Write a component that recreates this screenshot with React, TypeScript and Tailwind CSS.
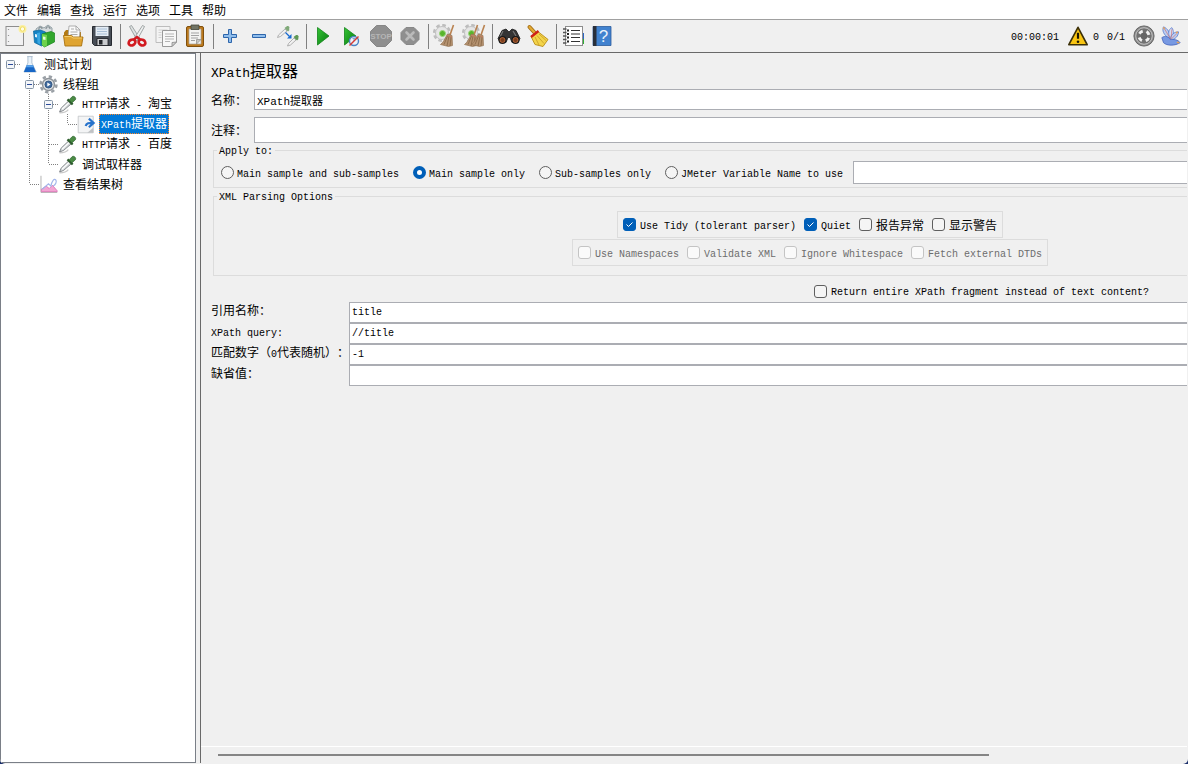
import React, { useState } from "react";
import clsx from "clsx";

const menus = ["文件", "编辑", "查找", "运行", "选项", "工具", "帮助"];

// Latin runs are set in a 10px mono so that two letters fill one Chinese cell.
function Txt({ text, big }: { text: string; big?: boolean }) {
  return (
    <span className="whitespace-pre [text-spacing-trim:space-all]">
      {text.split(/([\x20-\x7e]+)/).map((part, i) =>
        i % 2 === 1 ? (
          <span
            key={i}
            className={clsx(
              "font-['Liberation_Mono',monospace]",
              big ? "text-[13px]" : "text-[10px]"
            )}
          >
            {part}
          </span>
        ) : (
          part
        )
      )}
    </span>
  );
}

function Svg({ size = 24, children }: { size?: number; children: React.ReactNode }) {
  return (
    <svg width={size} height={size} viewBox="0 0 24 24" fill="none" className="shrink-0" aria-hidden="true">
      {children}
    </svg>
  );
}

function Gear() {
  return (
    <>
      <circle cx="9" cy="9" r="7.800" stroke="#bdbdbd" strokeWidth="2.600" strokeDasharray="3.600 2.526" />
      <circle cx="9" cy="9" r="6.500" fill="#e6e6e6" stroke="#c2c2c2" />
      <circle cx="9.500" cy="9.500" r="3" fill="#58b52c" stroke="#9bd47b" />
    </>
  );
}

function Broom({ x = 0 }: { x?: number }) {
  return (
    <g transform={`translate(${x} 0)`}>
      <path d="M20.500 1 17 11" stroke="#b98250" strokeWidth="1.600" />
      <path d="m14.500 10 4.500 1.500.5 10-4 1-8-2C11 18 12 14 14.500 10Z" fill="#b59270" stroke="#947352" strokeWidth=".7" />
      <path d="m14.500 12-3.500 8.500M16 12l-2 10M18 13l-1 9" stroke="#80603f" strokeWidth=".7" />
      <path d="m14 11.500 5 1.700" stroke="#c07a5e" strokeWidth="1" />
    </g>
  );
}

const icons: Record<string, React.ReactNode> = {
  new: (
    <>
      <rect x="3" y="2.500" width="17.500" height="19" fill="#f1f1f2" stroke="#8d8d8d" />
      <path d="M5.500 5v1M5.500 11v1M5.500 17v1" stroke="#999" strokeWidth="1.200" />
      <circle cx="19.500" cy="5" r="4" fill="#fbf0a0" />
      <circle cx="19.500" cy="5" r="2.200" fill="#fffce2" stroke="#f0dc62" />
    </>
  ),
  templates: (
    <>
      <path d="m4 5 4-3 4 2 4-3 4 3v5H4Z" fill="#d5dadd" stroke="#7f8f94" strokeWidth=".8" />
      <path d="M7 6c-1-3 3-4 3-1M14 5c0-3 4-3 4 0" stroke="#889297" strokeWidth="1.200" />
      <path d="m1.500 7 7-1 5 2v12l-4 2-7-3.500Z" fill="#1583c4" stroke="#0b669b" strokeWidth=".7" />
      <path d="m5 9 3-.5v12L5.500 19Z" fill="#39a8e3" />
      <path d="m3 10 2 .5v3L3 13Z" fill="#dff2ff" />
      <path d="m10 10 9-2.500 3.500 1.500v9l-10 5-2.500-2Z" fill="#32a72d" stroke="#17831a" strokeWidth=".7" />
      <path d="m10 10 5 1v10.500L12.500 23 10 21Z" fill="#6ed24b" />
      <path d="m11 12.500 2.500.5v3l-2.500-.5Z" fill="#e4fbd9" />
    </>
  ),
  open: (
    <>
      <path d="M3 8.500 5 6h4l1 2h10v6H3Z" fill="#b27912" />
      <path d="m7 13 1-11h7l4 4-.5 8Z" fill="#fafafa" stroke="#9c9c9c" strokeWidth=".8" />
      <path d="M15 2v4h4M10 5h3M9.500 8h7M9.500 10.500h7" stroke="#a4a4a4" strokeWidth=".9" />
      <path d="M2.500 11.500h8l2 1.500H22L20.500 22H4Z" fill="#dfa431" stroke="#a97311" strokeWidth=".9" />
      <path d="M3.500 12.500H10l2 1.500h9" stroke="#f6cd6c" />
    </>
  ),
  save: (
    <>
      <path d="M2.500 2.500h19v19h-17l-2-2Z" fill="#474d56" stroke="#262a30" />
      <path d="M5.500 2.500h13v9.500h-13Z" fill="#e5edf5" />
      <path d="M7 5h10M7 7.500h10M7 10h10" stroke="#a9bfd6" />
      <path d="M7 14.500h11v7H7Z" fill="#c9cbce" stroke="#191b1f" strokeWidth=".8" />
      <path d="M9 16h3.500v4.500H9Z" fill="#23262b" />
    </>
  ),
  cut: (
    <>
      <path d="M4.500 2.500 6.500 1.500l9 14-3 1.500Z" fill="#dfe3e3" stroke="#8a9090" strokeWidth=".8" />
      <path d="M19.500 2.500 17.500 1.500l-9 14 3 1.500Z" fill="#eff1f1" stroke="#8a9090" strokeWidth=".8" />
      <path d="m9 15.500 3-2.500 3 2.500" stroke="#d21a20" strokeWidth="2.400" />
      <ellipse cx="7" cy="18.500" rx="3.500" ry="2.800" transform="rotate(-28 7 18.500)" stroke="#d21a20" strokeWidth="2.700" />
      <ellipse cx="17" cy="18.500" rx="3.500" ry="2.800" transform="rotate(28 17 18.500)" stroke="#d21a20" strokeWidth="2.700" />
    </>
  ),
  copy: (
    <>
      <path d="M2 2.500h14v16H2Z" fill="#f3f3f3" stroke="#bdbdbd" />
      <path d="M4.500 6h9M4.500 8.500h3M4.500 11h3M4.500 13.500h3" stroke="#d0d0d0" />
      <path d="M8.500 6.500h14V18L18 22.500H8.500Z" fill="#f8f8f8" stroke="#999" />
      <path d="M11 10h9M11 12.500h9M11 15h9M11 17.500h5" stroke="#b5b5b5" />
      <path d="m22.500 18-4.500.5v4Z" fill="#d0d0d0" stroke="#888" strokeWidth=".8" />
    </>
  ),
  paste: (
    <>
      <rect x="3.500" y="2.500" width="17" height="20" rx="1.500" fill="#bd7a1d" stroke="#80500e" />
      <path d="M6 5h12v15H6Z" fill="#f4f4f2" stroke="#a7a59d" strokeWidth=".7" />
      <path d="M8 1h8v4.500H8Z" fill="#707465" stroke="#44473b" strokeWidth=".8" />
      <path d="M8 9h8M8 11.500h8M8 14h7M8 16.500h4" stroke="#a3a3a3" />
      <path d="M18 15.500 13.500 20v-4.500Z" fill="#c6c6c4" stroke="#8c8c8a" strokeWidth=".7" />
    </>
  ),
  expand: (
    <path d="M10.500 5.500h3v5h5v3h-5v5h-3v-5h-5v-3h5Z" fill="#8fbdec" stroke="#2d65ab" />
  ),
  collapse: <path d="M5.500 10.500h13v3h-13Z" fill="#8fbdec" stroke="#2d65ab" />,
  toggle: (
    <>
      <path d="m1.500 13.500 1-2.500L9 5l2 2-6.500 5.500Z" fill="#f1f1f1" stroke="#a9a9a9" strokeWidth=".9" />
      <path d="m8.500 4 3.500 3.500L13.500 6 13 5c1.500-1.500-.5-4-2.500-2.500Z" fill="#7fa978" />
      <path d="m11.500 22 1-2.500L18 14l2 2-5.500 5Z" fill="#f1f1f1" stroke="#a9a9a9" strokeWidth=".9" />
      <path d="m17.500 13 3.500 3.500 1.500-1.500-.3-1c1.500-1.500-.7-4-2.700-2.500Z" fill="#5f9856" />
      <path d="m9.500 8.500 4 4" stroke="#1769d0" strokeWidth="1.300" />
      <path d="M15.500 14.500H11l4.500-4.500Z" fill="#1769d0" />
    </>
  ),
  start: <path d="M6.500 3.500 18 12 6.500 21Z" fill="url(#go)" stroke="#118419" strokeWidth=".8" />,
  startNoPause: (
    <>
      <path d="M4.500 3.500 16 12 4.500 21Z" fill="url(#go)" stroke="#118419" strokeWidth=".8" />
      <circle cx="14" cy="17" r="4.500" fill="#eef2f8" stroke="#4b83c4" strokeWidth="1.400" />
      <path d="M12.500 14.500h3M14 17v-2.500" stroke="#7fa6cf" />
      <path d="m9.500 21.500 9-9" stroke="#d83a34" strokeWidth="1.500" />
    </>
  ),
  stop: (
    <>
      <path d="M7.500 1.500h9l6 6v9l-6 6h-9l-6-6v-9Z" fill="#8f8f8f" stroke="#868686" />
      <text x="12" y="15" textAnchor="middle" fontSize="8" fontWeight="700" fontFamily="Liberation Sans, sans-serif" fill="#b6b6b6">
        STOP
      </text>
    </>
  ),
  shutdown: (
    <>
      <path d="M8 3.500h8l5 5v7l-5 5H8l-5-5v-7Z" fill="#8f8f8f" stroke="#888" />
      <path d="m8.500 8.500 7 7m0-7-7 7" stroke="#bababa" strokeWidth="2.600" strokeLinecap="round" />
    </>
  ),
  clear: (
    <>
      <Gear />
      <Broom />
    </>
  ),
  clearAll: (
    <>
      <Gear />
      <Broom x={-5} />
      <Broom x={2} />
    </>
  ),
  search: (
    <>
      <path d="M5 6.500 9 5l3 3 3-3 4 1.500 4 8-2 4h-6l-2-5h-2l-2 5H3l-2-4Z" fill="#343434" stroke="#1b1b1b" strokeWidth=".8" />
      <path d="m6 7-3 6M16 7l3 5" stroke="#777" strokeWidth="1.200" />
      <circle cx="5.500" cy="16" r="4" fill="#191919" />
      <circle cx="18.500" cy="16" r="4" fill="#191919" />
      <circle cx="5.500" cy="16" r="2.500" fill="#7b3e1e" stroke="#c46f3b" strokeWidth=".8" />
      <circle cx="18.500" cy="16" r="2.500" fill="#7b3e1e" stroke="#c46f3b" strokeWidth=".8" />
    </>
  ),
  searchReset: (
    <>
      <path d="m3.500 3 5 5.500" stroke="#a36c12" strokeWidth="4" strokeLinecap="round" />
      <path d="m3.500 3 5 5.500" stroke="#e3ab35" strokeWidth="2.200" strokeLinecap="round" />
      <path d="M12.500 8 22 15.500 17 22.500l-8-2L5 12.500Z" fill="#f3d44a" stroke="#b98c15" strokeWidth=".9" />
      <path d="m9 13 4 8M11 11.500l7 8M13 10l7 6.500" stroke="#cda328" strokeWidth=".9" />
      <path d="m5 13 7.500-6" stroke="#cf2118" strokeWidth="2.400" />
    </>
  ),
  functions: (
    <>
      <path d="M21 9h2v6h-2Z" fill="#2b67c7" />
      <path d="M21 15h2v5h-2Z" fill="#2fae32" />
      <rect x="4.500" y="2.500" width="17" height="19" fill="#fff" stroke="#8d8d8d" />
      <path d="M10 6.500h9M10 10h9M10 13.500h9M10 17.500h9" stroke="#333" strokeWidth="1.200" />
      <path d="M6 6.500h2M6 10h2M6 13.500h2M6 17.500h2" stroke="#222" strokeWidth="2" />
      <path d="M2 5h3.500M2 8.500h3.500M2 12h3.500M2 15.500h3.500M2 19h3.500" stroke="#555" strokeWidth="1.500" />
    </>
  ),
  help: (
    <>
      <path d="M3 2.500h18v19H3Z" fill="#4182cf" stroke="#2b5c9c" strokeWidth=".8" />
      <path d="M3 2h3.500v20H3Z" fill="#292f39" />
      <text x="13.500" y="18" textAnchor="middle" fontSize="17" fontFamily="Liberation Sans, sans-serif" fill="#e8f1fb">
        ?
      </text>
    </>
  ),
};

const toolGroups = [
  ["new", "templates", "open", "save"],
  ["cut", "copy", "paste"],
  ["expand", "collapse", "toggle"],
  ["start", "startNoPause", "stop", "shutdown"],
  ["clear", "clearAll"],
  ["search", "searchReset"],
  ["functions", "help"],
];

function Toolbar() {
  return (
    <div className="flex h-[34px] shrink-0 items-center border-y border-t-[#a0a0a0] border-b-[#696969]">
      <svg width="0" height="0" className="absolute" aria-hidden="true">
        <linearGradient id="go" x1="0" y1="0" x2="1" y2="1">
          <stop offset="0" stopColor="#35c435" />
          <stop offset="1" stopColor="#067a10" />
        </linearGradient>
      </svg>
      {toolGroups.map((group, i) => (
        <div key={i} className="flex items-center">
          {i > 0 && <div className="mr-px ml-1 h-[25px] w-px bg-[#808080]" />}
          {group.map((name) => (
            <button
              key={name}
              type="button"
              aria-label={name}
              disabled={name === "stop" || name === "shutdown"}
              className="flex h-7 w-[29px] items-center justify-center"
            >
              <Svg>{icons[name]}</Svg>
            </button>
          ))}
        </div>
      ))}
      <div className="ml-auto flex items-center pr-[7px]">
        <Txt text="00:00:01" />
        <button type="button" aria-label="log" className="ml-2 flex items-center gap-1">
          <Svg size={22}>
            <path d="M12 2.500 22 21.500H2Z" fill="#f9c513" stroke="#3c3008" strokeWidth="1.800" strokeLinejoin="round" />
            <path d="M12 8.500v6.500" stroke="#1c1600" strokeWidth="2.400" />
            <circle cx="12" cy="18.200" r="1.400" fill="#1c1600" />
          </Svg>
          <Txt text="0" />
        </button>
        <span className="ml-2">
          <Txt text="0/1" />
        </span>
        <span className="ml-2">
          <Svg size={22}>
            <circle cx="12" cy="12" r="11" fill="#8b8b8b" stroke="#5d5d5d" />
            <circle cx="12" cy="12" r="9" fill="#727272" stroke="#c9c9c9" />
            <circle cx="12" cy="12" r="5.500" stroke="#f2f2f2" strokeWidth="3.200" strokeDasharray="4.320" strokeDashoffset="-2.160" />
            <circle cx="12" cy="12" r="3.500" fill="#666" />
          </Svg>
        </span>
        <span className="ml-1.5">
          <Svg size={20}>
            <path d="M10 15C3 11 1 5 3 1c5 2 8 7 8 13Z" fill="#b9cdf3" stroke="#5274c9" strokeWidth=".9" />
            <path d="M11 15C8 9 9 4 13 2c3 4 2 9-1 13Z" fill="#d4def6" stroke="#5274c9" strokeWidth=".9" />
            <path d="M11 16c1-6 5-9 10-9 0 5-4 9-9 10Z" fill="#b9cdf3" stroke="#5274c9" strokeWidth=".9" />
            <path d="M1 14c4-3 8-1 10 2 4 0 9 0 12 4-6 4-16 4-20 0Z" fill="#7899e2" stroke="#3f5fb8" strokeWidth=".9" />
            <path d="m4 3 7 12M13 4l-1 11M19 9l-7 7" stroke="#d0706d" strokeWidth=".8" />
            <path d="M3 1.500 4 4M20 7l-2 1.500M22 20l-3-.5" stroke="#e9a45a" strokeWidth="1.800" />
          </Svg>
        </span>
      </div>
    </div>
  );
}

const dropper = (
  <>
    <path d="M2 22.500c5 0 9-1 11-4" stroke="#c9c9c9" strokeWidth="1.500" />
    <path d="m2 21.500 2-5L14 7l3.500 3.500L7 19.500Z" fill="#d4d8da" stroke="#6f7478" />
    <path d="M5 18 14.500 9" stroke="#fff" strokeWidth="1.500" />
    <path d="m12 5.500 6.500 6.500" stroke="#2c5a2b" strokeWidth="2.800" />
    <path d="m14 6 4-4c2-1.500 5.500 1.500 4 4l-4.500 4Z" fill="#4b8b45" stroke="#2d6130" strokeWidth=".8" />
  </>
);

const treeIcons: Record<string, React.ReactNode> = {
  plan: (
    <>
      <path d="M9 2h7M10 2v8L5 21.500h15.500L15 10V2" fill="#e9f2fa" stroke="#9eb4c7" />
      <path d="M8.500 13h8L20 21.500H5Z" fill="#1766c6" />
      <path d="M8.500 13h8l1 2.500h-10Z" fill="#57a2ea" />
    </>
  ),
  gear: (
    <>
      <circle cx="12" cy="12" r="10" stroke="#9aa0a6" strokeWidth="3.200" strokeDasharray="4.200 3.650" />
      <circle cx="12" cy="12" r="7.500" fill="#dfe3e6" stroke="#8f9499" strokeWidth="1.800" />
      <circle cx="12" cy="12" r="4.500" fill="#3e6a9f" stroke="#2d4d76" />
      <path d="m10.500 9.500 4 2.500-4 2.500Z" fill="#fff" />
    </>
  ),
  dropper,
  extractor: (
    <>
      <path d="M1.500 1.500h19v21h-19Z" fill="#f3f4f5" stroke="#bfc2c5" />
      <path d="M20.500 16v6.500H13Z" fill="#bfc2c5" />
      <path d="M11 14c1-4 4-4 9-4M15 4.500l6 5.500-6 5.500" stroke="#2873cb" strokeWidth="2.800" />
    </>
  ),
  chart: (
    <>
      <path d="M2.500 1v21H23" stroke="#a0a0a0" />
      <path d="M3 21v-3l6-4 4 3 4-4 6 7v1Z" fill="#f3a5d4" stroke="#d870b3" strokeWidth="1" />
      <path d="m4 18 8-7 3 3c1-6 4-10 6-8s0 6-3 8" stroke="#a3b6ea" strokeWidth="1.500" />
    </>
  ),
};

// Guides per level: " " empty, "|" line, "+" branch, "L" last branch, "R" open root, "M" open inner.
const nodes = [
  { guides: "R", icon: "plan", label: "测试计划" },
  { guides: " M", icon: "gear", label: "线程组" },
  { guides: " |M", icon: "dropper", label: "HTTP请求 - 淘宝" },
  { guides: " ||L", icon: "extractor", label: "XPath提取器" },
  { guides: " |+", icon: "dropper", label: "HTTP请求 - 百度" },
  { guides: " |L", icon: "dropper", label: "调试取样器" },
  { guides: " L", icon: "chart", label: "查看结果树" },
];

function Guide({ kind }: { kind: string }) {
  const open = kind === "R" || kind === "M";
  const art = (
    <svg width="19" height="20" viewBox="0 0 19 20" fill="none" aria-hidden="true">
      <g stroke="#808080" strokeDasharray="1 1" shapeRendering="crispEdges">
        {"|+ML".includes(kind) && <path d="M9.500 0v10" />}
        {"|+M".includes(kind) && <path d="M9.500 10v10" />}
        {"+LMR".includes(kind) && <path d="M10 10.500h9" />}
      </g>
      {open && (
        <>
          <rect x="5.500" y="6.500" width="8" height="8" rx="1" fill="#f4f6f9" stroke="#8494a6" />
          <path d="M7 10.500h5" stroke="#2b4c9b" />
        </>
      )}
    </svg>
  );
  if (!open) return <span className="w-[19px]">{kind !== " " && art}</span>;
  return (
    <button type="button" aria-label="collapse" className="w-[19px]">
      {art}
    </button>
  );
}

function Tree() {
  const [selected, setSelected] = useState(3);
  return (
    <div className="w-[196px] shrink-0 border border-[#7a7f87] bg-white">
      {nodes.map((node, i) => (
        <div key={i} className="flex h-5 items-center">
          {node.guides.split("").map((kind, level) => (
            <Guide key={level} kind={kind} />
          ))}
          <Svg size={19}>{treeIcons[node.icon]}</Svg>
          <button
            type="button"
            onClick={() => setSelected(i)}
            className={clsx(
              "ml-[3px] flex h-5 items-center border border-dotted px-px",
              selected === i ? "border-[#ff8728] bg-[#0078d7] text-white" : "border-transparent"
            )}
          >
            <Txt text={node.label} />
          </button>
        </div>
      ))}
    </div>
  );
}

function Radio({ label, defaultChecked }: { label: string; defaultChecked?: boolean }) {
  return (
    <label className="flex h-4 items-center gap-[3px]">
      <input
        type="radio"
        name="scope"
        defaultChecked={defaultChecked}
        className="size-[13px] appearance-none rounded-full border border-[#5f5f5f] bg-[#f5f5f5] checked:border-4 checked:border-[#005fb8] checked:bg-white"
      />
      <Txt text={label} />
    </label>
  );
}

function Check({ label, ...props }: { label: string; defaultChecked?: boolean; disabled?: boolean }) {
  return (
    <label className="flex h-4 items-center gap-1 has-disabled:text-[#6d6d6d]">
      <span className="grid size-[13px]">
        <input
          type="checkbox"
          {...props}
          className="peer col-start-1 row-start-1 size-[13px] appearance-none rounded-[3px] border border-[#5f5f5f] bg-[#f5f5f5] checked:border-[#005fb8] checked:bg-[#005fb8] disabled:border-[#c4c4c4] disabled:bg-[#fafafa]"
        />
        <svg
          viewBox="0 0 13 13"
          fill="none"
          className="pointer-events-none invisible col-start-1 row-start-1 size-[13px] peer-checked:visible"
        >
          <path d="m3.500 6.500 2 2 4-4" stroke="#fff" />
        </svg>
      </span>
      <Txt text={label} />
    </label>
  );
}

const inputClass =
  "min-w-0 flex-1 border border-[#abadb3] bg-white px-0.5 font-['Liberation_Mono','Noto_Sans_CJK_SC',monospace] outline-none";

function Group({ title, className, children }: { title: string; className: string; children: React.ReactNode }) {
  return (
    <fieldset className={clsx("ml-0.5 border border-[#dcdcdc] px-[7px]", className)}>
      <legend className="-ml-1 flex h-3.5 items-center px-0.5">
        <Txt text={title} />
      </legend>
      {children}
    </fieldset>
  );
}

const fields = [
  { id: "refname", label: "引用名称：", value: "title" },
  { id: "query", label: "XPath query:", value: "//title" },
  { id: "match", label: "匹配数字（0代表随机）：", value: "-1" },
  { id: "default", label: "缺省值：", value: "" },
];

function Extractor() {
  return (
    <div className="min-w-[1216px] px-2.5 pt-2">
      <h1 className="flex h-[22px] items-center text-base leading-5">
        <Txt text="XPath提取器" big />
      </h1>
      <div className="mt-1.5 flex h-[21px] items-center">
        <label htmlFor="name" className="w-[43px]">
          <Txt text="名称：" />
        </label>
        <input id="name" defaultValue="XPath提取器" className={clsx(inputClass, "h-full text-[11px]")} />
      </div>
      <div className="mt-[7px] flex h-[26px] items-center">
        <label htmlFor="comment" className="w-[43px]">
          <Txt text="注释：" />
        </label>
        <input id="comment" className={clsx(inputClass, "h-full text-[11px]")} />
      </div>

      <Group title="Apply to:" className="pt-1 pb-[3px]">
        <div className="flex items-center gap-2.5">
          <div className="flex items-center gap-3.5">
            <Radio label="Main sample and sub-samples" />
            <Radio label="Main sample only" defaultChecked />
            <Radio label="Sub-samples only" />
            <Radio label="JMeter Variable Name to use" />
          </div>
          <input aria-label="JMeter Variable Name" className={clsx(inputClass, "h-[23px] text-[10px]")} />
        </div>
      </Group>

      <Group title="XML Parsing Options" className="mt-px pt-2 pb-[9px]">
        <div className="flex flex-col items-center gap-px">
          <div className="flex h-[27px] items-center gap-2 border border-[#dcdcdc] px-[5px]">
            <Check label="Use Tidy (tolerant parser)" defaultChecked />
            <Check label="Quiet" defaultChecked />
            <Check label="报告异常" />
            <Check label="显示警告" />
          </div>
          <div className="flex h-[27px] items-center gap-2 border border-[#dcdcdc] px-[5px]">
            <Check label="Use Namespaces" disabled />
            <Check label="Validate XML" disabled />
            <Check label="Ignore Whitespace" disabled />
            <Check label="Fetch external DTDs" disabled />
          </div>
        </div>
      </Group>

      <div className="flex h-[26px] items-center pt-1 pl-[603px]">
        <Check label="Return entire XPath fragment instead of text content?" />
      </div>

      {fields.map((field) => (
        <div key={field.id} className="flex h-[21px] items-start">
          <label htmlFor={field.id} className="w-[138px]">
            <Txt text={field.label} />
          </label>
          <input id={field.id} defaultValue={field.value} className={clsx(inputClass, "h-full text-[10px]")} />
        </div>
      ))}
    </div>
  );
}

export default function App() {
  return (
    <div className="h-screen bg-[#1b2f6b]">
      <div
        lang="zh-CN"
        className="flex h-full flex-col overflow-hidden rounded-b-[5px] bg-[#f0f0f0] font-['Noto_Sans_CJK_SC',sans-serif] text-xs text-black"
      >
        <nav className="flex h-[19px] shrink-0 items-center gap-[9px] bg-white pl-1">
          {menus.map((menu) => (
            <button key={menu} type="button">
              {menu}
            </button>
          ))}
        </nav>
        <Toolbar />
        <div className="flex min-h-0 flex-1 gap-1 pr-px pb-px">
          <Tree />
          <main className="flex min-w-0 flex-1 flex-col border-l border-[#696969]">
            <div className="min-h-0 flex-1 overflow-hidden">
              <Extractor />
            </div>
            <div className="flex h-[17px] items-center border-t border-white px-[17px]">
              <div className="h-0.5 w-[81%] bg-[#858585]" />
            </div>
          </main>
        </div>
      </div>
    </div>
  );
}
